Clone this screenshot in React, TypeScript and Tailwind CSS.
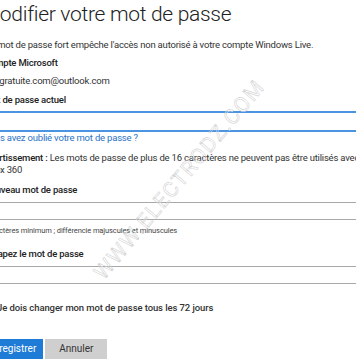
import React from 'react';

const font = { fontFamily: 'Roboto, Lato, sans-serif' };

function Field({ focused }: { focused?: boolean }) {
  return (
    <div
      className={`w-[420px] bg-white ${
        focused ? 'h-[21px] border-y-2 border-[#4a94e2]' : 'h-[18px] border-y-[1.5px] border-[#a8a8a8]'
      }`}
    />
  );
}

const text = 'text-[9.5px] tracking-[-0.2px]';
const label = 'text-[9.5px] tracking-[-0.2px] font-medium text-[#222]';

export default function App() {
  return (
    <div className="relative w-[356px] h-[364px] overflow-hidden bg-white" style={font}>
      <div className="-ml-[16px] w-[420px] text-[#333]">
        <h1 className="h-[30px] -ml-[2px] text-[21px] font-light leading-[28px] text-[#222] tracking-[-0.3px]">
          Modifier votre mot de passe
        </h1>
        <p className={`mt-[8px] ${text} leading-[14px] whitespace-nowrap`}>
          Un mot de passe fort empêche l'accès non autorisé à votre compte Windows Live.
        </p>
        <div className={`mt-[4px] ${label} leading-[14px]`}>Compte Microsoft</div>
        <div className={`mt-[4px] ${text} leading-[14px] -ml-[2px]`}>mailgratuite.com@outlook.com</div>
        <div className={`mt-[5px] ${label} leading-[14px]`}>Mot de passe actuel</div>
        <div className="mt-[4px]">
          <Field focused />
        </div>
        <a className={`block ${text} leading-[12px] text-[#2a73c8]`}>Vous avez oublié votre mot de passe ?</a>
        <p className={`mt-[8px] ${text} leading-[12px] whitespace-nowrap`}>
          <span className="font-medium text-[#222]">Avertissement :</span> Les mots de passe de plus de 16 caractères ne
          peuvent pas être utilisés avec
          <br />
          Xbox 360
        </p>
        <div className={`mt-[7px] ${label} leading-[14px]`}>Nouveau mot de passe</div>
        <div className="mt-[5px]">
          <Field />
        </div>
        <div className="mt-[5px] -ml-[5px] text-[7.5px] tracking-[-0.1px] leading-[12px] text-[#444]">
          8 caractères minimum ; différencie majuscules et minuscules
        </div>
        <div className={`mt-[10px] ${label} leading-[14px]`}>Retapez le mot de passe</div>
        <div className="mt-[5px]">
          <Field />
        </div>
        <label className="mt-[17px] -ml-[5px] flex items-center gap-[5px] text-[9.5px] tracking-[-0.1px] leading-[14px] font-medium text-[#333]">
          <input type="checkbox" className="w-[13px] h-[13px] m-0" />
          Je dois changer mon mot de passe tous les 72 jours
        </label>
        <div className="mt-[24px] -ml-[4px] flex gap-[2px]">
          <button className="h-[20px] pl-[8px] pr-[7px] bg-[#1e7bd6] text-white text-[10px] leading-[20px]">
            Enregistrer
          </button>
          <button className="h-[20px] w-[62px] bg-[#cfcfcf] text-[#333] text-[10px] leading-[20px]">Annuler</button>
        </div>
      </div>
      <div className="pointer-events-none absolute left-[180px] top-[180px] -translate-x-1/2 -translate-y-1/2 -rotate-[50deg] whitespace-nowrap text-[21px] tracking-[1.5px] text-transparent [-webkit-text-stroke:0.6px_#d4d4d4]">
        WWW.ELECTRODZ.COM
      </div>
    </div>
  );
}
